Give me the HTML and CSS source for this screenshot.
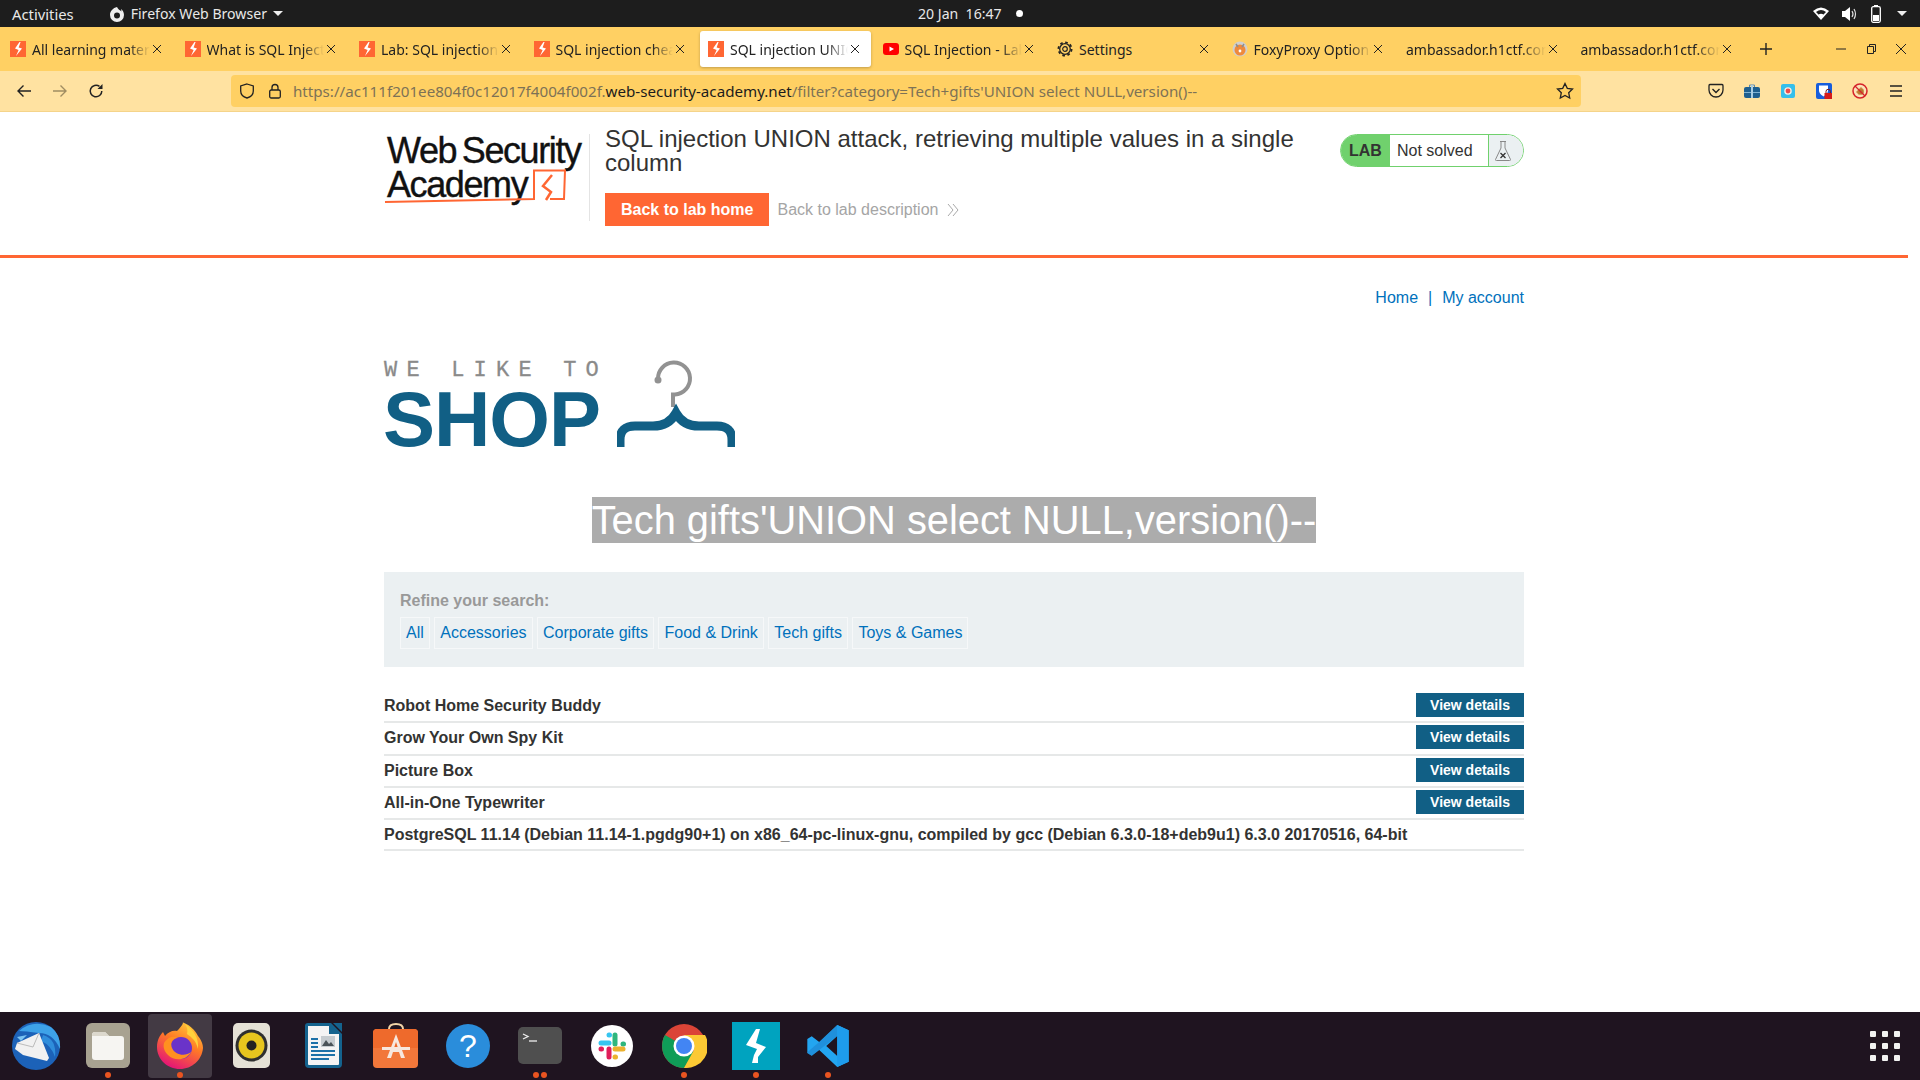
FILE: index.html
```html
<!DOCTYPE html>
<html>
  <head>
    <meta charset="utf-8">
    <title>SQL injection UNION attack</title>
    <link rel="stylesheet" href="styles.css">
  </head>
  <body>
    <svg class="defs" width="0" height="0">
      <symbol id="burp" viewBox="0 0 16 16">
        <rect width="16" height="16" fill="#ff6633"/>
        <path d="M9.500 1 5 7.600 8.600 9 6 15 12 7.600 8.600 6.600 10.600 1Z" fill="#fff"/>
      </symbol>
      <symbol id="close" viewBox="0 0 10 10">
        <path d="M1 1 9 9M9 1 1 9" stroke="#222" stroke-width="1" fill="none"/>
      </symbol>
    </svg>

    <div class="topbar">
      <div class="topbar-left">
        <span class="activities">Activities</span>
        <svg width="18" height="18" viewBox="0 0 18 18"><path fill-rule="evenodd" d="M9 2C5 3 2 6 2 10A7 7 0 0 0 16 10C16 7 14.500 5 13 4L13.500 6.500C12 5 10 4.500 9 2ZM9 7.500A3 3 0 1 1 9 13.500 3 3 0 0 1 9 7.500Z" fill="#eee"/></svg>
        <span>Firefox Web Browser</span>
        <span class="caret"></span>
      </div>
      <div class="clock"><span>20 Jan&nbsp; 16:47</span><i class="clock-dot"></i></div>
      <div class="status">
        <svg width="16" height="14" viewBox="0 0 16 14"><path d="M0 4Q8-3 16 4L8 13Z" fill="#fff"/><path d="M3 5Q8 1 13 5L8 10Z" fill="#1d1d1d"/><path d="M5.500 7.500Q8 6 10.500 7.500L8 12Z" fill="#fff"/></svg>
        <svg width="16" height="14" viewBox="0 0 16 14"><path d="M0 4H3L8 0V14L3 10H0Z" fill="#fff"/><path d="M10 4Q12 7 10 10M12 2Q15 7 12 12" stroke="#ddd" fill="none" stroke-width="1.200"/></svg>
        <svg width="10" height="18" viewBox="0 0 10 18"><rect x="3" width="4" height="2" fill="#fff"/><rect x=".7" y="1.700" width="8.600" height="15.600" rx="1.500" fill="none" stroke="#fff" stroke-width="1.300"/><rect x="2" y="10" width="6" height="6" fill="#fff"/></svg>
        <span class="caret"></span>
      </div>
    </div>

    <div class="tabbar">
      <div class="tab"><svg class="fav"><use href="#burp"/></svg><span class="tab-title fade">All learning materials</span><svg class="tab-x"><use href="#close"/></svg></div>
      <div class="tab"><svg class="fav"><use href="#burp"/></svg><span class="tab-title fade">What is SQL Injection</span><svg class="tab-x"><use href="#close"/></svg></div>
      <div class="tab"><svg class="fav"><use href="#burp"/></svg><span class="tab-title fade">Lab: SQL injection UNION</span><svg class="tab-x"><use href="#close"/></svg></div>
      <div class="tab"><svg class="fav"><use href="#burp"/></svg><span class="tab-title fade">SQL injection cheat sheet</span><svg class="tab-x"><use href="#close"/></svg></div>
      <div class="tab active"><svg class="fav"><use href="#burp"/></svg><span class="tab-title fade">SQL injection UNION attack</span><svg class="tab-x"><use href="#close"/></svg></div>
      <div class="tab">
        <svg class="fav" viewBox="0 0 16 16"><rect y="2" width="16" height="12" rx="3" fill="#f00"/><path d="M6.500 5.500 11 8 6.500 10.500Z" fill="#fff"/></svg>
        <span class="tab-title fade">SQL Injection - Lab series</span><svg class="tab-x"><use href="#close"/></svg>
      </div>
      <div class="tab">
        <svg class="fav" viewBox="0 0 16 16"><circle cx="8" cy="8" r="2.300" fill="none" stroke="#222" stroke-width="1.200"/><circle cx="8" cy="8" r="5.300" fill="none" stroke="#222" stroke-width="1.300"/><circle cx="8" cy="8" r="6.600" fill="none" stroke="#222" stroke-width="1.800" stroke-dasharray="2.600 2.580"/></svg>
        <span class="tab-title">Settings</span><svg class="tab-x"><use href="#close"/></svg>
      </div>
      <div class="tab">
        <svg class="fav" viewBox="0 0 16 16"><circle cx="8" cy="8" r="7.500" fill="#cfcfcf"/><circle cx="8" cy="9" r="5.500" fill="#ee8a3c"/><path d="M4 3 6 6M12 3 10 6" stroke="#8d8d8d" stroke-width="1.500"/><circle cx="8" cy="10" r="1.400" fill="#fff"/></svg>
        <span class="tab-title fade">FoxyProxy Options</span><svg class="tab-x"><use href="#close"/></svg>
      </div>
      <div class="tab"><span class="tab-title fade">ambassador.h1ctf.com</span><svg class="tab-x"><use href="#close"/></svg></div>
      <div class="tab"><span class="tab-title fade">ambassador.h1ctf.com</span><svg class="tab-x"><use href="#close"/></svg></div>
      <svg class="plus" width="14" height="14" viewBox="0 0 14 14"><path d="M7 1V13M1 7H13" stroke="#222" stroke-width="1.400"/></svg>
      <div class="win-controls">
        <svg width="12" height="12" viewBox="0 0 12 12"><path d="M1 6H11" stroke="#222"/></svg>
        <svg width="12" height="12" viewBox="0 0 12 12"><path d="M2.500 3.500H8.500V10.500H2.500ZM4.500 3.500V1.500H10.500V8.500H8.500" stroke="#222" fill="none"/></svg>
        <svg width="12" height="12" viewBox="0 0 12 12"><path d="M1 1 11 11M11 1 1 11" stroke="#222"/></svg>
      </div>
    </div>

    <div class="navbar">
      <div class="nav-btns">
        <svg width="16" height="16" viewBox="0 0 16 16"><path d="M15 8H2M7.500 2.500 2 8 7.500 13.500" stroke="#222" stroke-width="1.400" fill="none"/></svg>
        <svg width="16" height="16" viewBox="0 0 16 16"><path d="M1 8H14M8.500 2.500 14 8 8.500 13.500" stroke="#a08d62" stroke-width="1.400" fill="none"/></svg>
        <svg width="16" height="16" viewBox="0 0 16 16"><path d="M13.800 8A5.800 5.800 0 1 1 11.500 3.400" stroke="#222" stroke-width="1.500" fill="none"/><path d="M14.500 1V6H9.500Z" fill="#222"/></svg>
      </div>
      <div class="urlbar">
        <svg width="16" height="16" viewBox="0 0 16 16"><path d="M8 1 14.300 3V8C14.300 12 10.500 14.300 8 15 5.500 14.300 1.700 12 1.700 8V3Z" stroke="#222" stroke-width="1.300" fill="none"/></svg>
        <svg class="lock" width="14" height="16" viewBox="0 0 14 16"><rect x="1.700" y="7" width="10.600" height="8" rx="1.500" stroke="#222" stroke-width="1.300" fill="none"/><path d="M4 7V4.500A3 3 0 0 1 10 4.500V7" stroke="#222" stroke-width="1.300" fill="none"/></svg>
        <div class="url"><span class="dim">https://ac111f201ee804f0c12017f4004f002f.</span>web-security-academy.net<span class="dim">/filter?category=Tech+gifts'UNION select NULL,version()--</span></div>
        <svg width="18" height="18" viewBox="0 0 18 18"><path d="M9 1.500 11.300 6.400 16.500 7 12.700 10.700 13.700 16 9 13.400 4.300 16 5.300 10.700 1.500 7 6.700 6.400Z" stroke="#222" stroke-width="1.300" fill="none"/></svg>
      </div>
      <div class="ext-icons">
        <svg width="16" height="16" viewBox="0 0 16 16"><path d="M2 1.500H14A1.200 1.200 0 0 1 15 2.700V7A7 7 0 0 1 1 7V2.700A1.200 1.200 0 0 1 2 1.500Z" stroke="#222" stroke-width="1.300" fill="none"/><path d="M4.500 6 8 9.500 11.500 6" stroke="#222" stroke-width="1.400" fill="none"/></svg>
        <svg width="16" height="16" viewBox="0 0 16 16"><path d="M5.500 4V2H10.500V4" stroke="#5c89ad" fill="none"/><rect y="4" width="16" height="11" rx="2" fill="#1f5f8f"/><rect y="9" width="16" height="1" fill="#7fb2d4"/><rect x="7" y="2" width="2" height="13" fill="#a9cde4"/></svg>
        <svg width="16" height="16" viewBox="0 0 16 16"><rect x="1" y="1" width="14" height="14" rx="2" fill="#35bfeb"/><circle cx="8" cy="8" r="3.800" fill="#f4f0e6"/><circle cx="8" cy="8" r="2.400" fill="#ee4b4b"/></svg>
        <svg width="16" height="16" viewBox="0 0 16 16"><rect width="16" height="16" rx="2" fill="#175ddc"/><path d="M3 2.500H12V7.500C12 10.500 9 12.500 7.500 13.500 6 12.500 3 10.500 3 7.500Z" fill="#fff"/><rect x="8.500" y="10" width="7.500" height="6" fill="#d41a1a"/><path d="M10 10V8.500A2.200 2.200 0 0 1 14.400 8.500V10" stroke="#7a1515" fill="none"/></svg>
        <svg width="16" height="16" viewBox="0 0 16 16"><circle cx="8" cy="8" r="6.500" fill="#fbe3b8"/><path d="M4 9 9 4 12 7 7 12Z" fill="#c9853f"/><circle cx="9" cy="9" r="2.800" fill="#b9782f"/><circle cx="8" cy="8" r="7" stroke="#d6232a" stroke-width="1.500" fill="none"/><path d="M3 3 13 13" stroke="#d6232a" stroke-width="1.300"/></svg>
        <svg width="16" height="16" viewBox="0 0 16 16"><path d="M2 3H14M2 8H14M2 13H14" stroke="#222" stroke-width="1.500"/></svg>
      </div>
    </div>

    <div class="page">
      <header class="lab-header">
        <div class="lab-inner">
          <div class="wsa-logo">
            <div class="wsa-text">Web Security<br>Academy</div>
            <svg class="wsa-mark" width="190" height="40" viewBox="0 0 190 40">
              <path d="M1 35 150 32V3.500H181L180 32H166" stroke="#ff6633" stroke-width="2" fill="none"/>
              <path d="M168 8 159 19 167 25 162 33" stroke="#ff6633" stroke-width="2.500" fill="none"/>
            </svg>
          </div>
          <div class="lab-title">
            <h2>SQL injection UNION attack, retrieving multiple values in a single column</h2>
            <div class="lab-actions">
              <a class="btn-orange">Back to lab home</a>
              <a class="back-desc">Back to lab description</a>
              <svg width="12" height="14" viewBox="0 0 12 14"><path d="M1 1 6 7 1 13M6 1 11 7 6 13" stroke="#a9a9a9" fill="none"/></svg>
            </div>
          </div>
          <div class="lab-badge">
            <span class="badge-lab">LAB</span>
            <span class="badge-status">Not solved</span>
            <span class="badge-icon">
              <svg width="18" height="22" viewBox="0 0 18 22"><path d="M6 1.500H12M7 1.500V8L1.500 19.500Q1.200 20.500 2.500 20.500H15.500Q16.800 20.500 16.500 19.500L11 8V1.500" stroke="#888" fill="none"/><path d="M6.500 13 11.500 18M11.500 13 6.500 18" stroke="#333" stroke-width="1.300"/></svg>
            </span>
          </div>
        </div>
      </header>

      <div class="container">
        <div class="top-links"><a>Home</a><span class="sep">|</span><a>My account</a></div>

        <div class="shop-logo">
          <div class="shop-text">
            <div class="we-like">WE LIKE TO</div>
            <div class="shop">SHOP</div>
          </div>
          <svg class="hanger" width="118" height="90" viewBox="0 0 118 90">
            <path d="M41 19A16 16 0 1 1 58 34.500H56V47" stroke="#929292" stroke-width="4" fill="none"/>
            <circle cx="41" cy="20" r="3.500" fill="#929292"/>
            <path d="M3 87V80Q3 66 18 66H36Q52 66 59 53 66 66 82 66H100Q115 66 115 80V87" stroke="#115f85" stroke-width="9" fill="none"/>
          </svg>
        </div>

        <h1 class="search-title"><span class="selected">Tech gifts'UNION select NULL,version()--</span></h1>

        <section class="filter">
          <div class="filter-label">Refine your search:</div>
          <div class="filter-links">
            <a>All</a><a>Accessories</a><a>Corporate gifts</a><a>Food &amp; Drink</a><a>Tech gifts</a><a>Toys &amp; Games</a>
          </div>
        </section>

        <div class="products">
          <div class="row"><span>Robot Home Security Buddy</span><a class="btn-view">View details</a></div>
          <div class="row"><span>Grow Your Own Spy Kit</span><a class="btn-view">View details</a></div>
          <div class="row"><span>Picture Box</span><a class="btn-view">View details</a></div>
          <div class="row"><span>All-in-One Typewriter</span><a class="btn-view">View details</a></div>
          <div class="row last"><span>PostgreSQL 11.14 (Debian 11.14-1.pgdg90+1) on x86_64-pc-linux-gnu, compiled by gcc (Debian 6.3.0-18+deb9u1) 6.3.0 20170516, 64-bit</span></div>
        </div>
      </div>
    </div>

    <div class="dock">
      <div class="dock-item">
        <svg width="50" height="50" viewBox="0 0 50 50"><circle cx="25" cy="25" r="24" fill="#1c62b8"/><path d="M8 10Q22-2 40 6 50 14 49 28 42 12 28 12 14 10 8 10Z" fill="#3ea2e8"/><path d="M32 14Q46 18 44 36 40 24 30 20Z" fill="#2f8ddb"/><path d="M6 22 28 12 38 37 36 40 12 34 4 28Z" fill="#f1f1f1"/><path d="M6 22 22 26 28 12" stroke="#bbb" fill="none"/><path d="M6 16 16 14 10 20Z" fill="#7cc4f2"/></svg>
      </div>
      <div class="dock-item running">
        <svg width="44" height="46" viewBox="0 0 44 46"><rect width="44" height="45" rx="6" fill="#a8a291"/><path d="M6 12Q6 9 9 9H19L23 13H35Q38 13 38 16V34Q38 37 35 37H9Q6 37 6 34Z" fill="#f6f5f2"/><path d="M6 13Q6 9 9 9H19L23 13Z" fill="#dcd8cd"/></svg>
      </div>
      <div class="dock-item running highlighted">
        <svg width="46" height="48" viewBox="0 0 46 48">
          <defs>
            <linearGradient id="fx" x1="0.800" y1="0" x2="0.300" y2="1"><stop offset="0" stop-color="#ffd23c"/><stop offset=".45" stop-color="#ff7a26"/><stop offset="1" stop-color="#e3107a"/></linearGradient>
          </defs>
          <path d="M23 47C10 47 0 37 0 25 0 18 3 13 6 10L8 14C11 10 16 8 20 9 26 3 27 0 25 0 36 4 40 12 41 14 45 19 46 23 46 26 45 38 35 47 23 47Z" fill="url(#fx)"/>
          <circle cx="24" cy="26" r="11" fill="#6a33c9"/>
          <path d="M7 21C12 14 17 14 21 16 15 16 13 21 15 26 18 33 28 35 34 30 30 38 18 40 11 33 7 29 6 25 7 21Z" fill="#ff9020"/>
          <path d="M28 2C37 8 42 16 41 27 39 18 34 15 30 12 31 8 30 5 28 2Z" fill="#ffd23c"/>
        </svg>
      </div>
      <div class="dock-item">
        <svg width="38" height="46" viewBox="0 0 38 46"><rect width="37" height="45" rx="5" fill="#e5e1d6"/><circle cx="18.500" cy="22.500" r="16" fill="#2f2f2f"/><circle cx="18.500" cy="22.500" r="13" fill="#e7c51e"/><circle cx="18.500" cy="22.500" r="5" fill="#222"/></svg>
      </div>
      <div class="dock-item">
        <svg width="38" height="46" viewBox="0 0 38 46"><path d="M3 0H26L37 11V41Q37 45 33 45H4Q0 45 0 41V3Q0 0 3 0Z" fill="#14638e"/><path d="M3 3H24V11H34V41Q34 42 33 42H4Q3 42 3 41Z" fill="#f4f4f4"/><path d="M28 0 37 0V9Z" fill="#14638e"/><rect x="16" y="13" width="14" height="11" fill="#c6ccd0"/><path d="M17 23 21 17 24 21 26 19 29 23Z" fill="#4a5358"/><path d="M6 16H13M6 20H13M6 24H13M6 28H30M6 32H30M6 36H24" stroke="#1c71a8" stroke-width="2"/></svg>
      </div>
      <div class="dock-item">
        <svg width="46" height="46" viewBox="0 0 46 46"><path d="M16 6Q16 1 23 1 30 1 30 6" stroke="#f2d4a8" stroke-width="2" fill="none"/><rect y="6" width="45" height="39" rx="4" fill="#f2773a"/><path d="M0 10Q0 6 4 6H41Q45 6 45 10V25H0Z" fill="#ee6a2c"/><path d="M23 11 14 35H18L20 29H26L28 35H32ZM21 25 23 19 25 25Z" fill="#f7e7de"/><path d="M9 24H37V27H9Z" fill="#f7e7de"/></svg>
      </div>
      <div class="dock-item">
        <svg width="46" height="46" viewBox="0 0 46 46"><circle cx="23" cy="23" r="22" fill="#2a8ddb"/><text x="23" y="34" text-anchor="middle" class="help-q">?</text></svg>
      </div>
      <div class="dock-item running two">
        <svg width="46" height="38" viewBox="0 0 46 38"><rect x="1" width="44" height="37" rx="5" fill="#4f4f4f"/><path d="M6 7 11 9.500 6 12" stroke="#eee" fill="none" stroke-width="1.300"/><path d="M12 14H20" stroke="#eee" stroke-width="1.300"/></svg>
      </div>
      <div class="dock-item">
        <svg width="44" height="44" viewBox="0 0 44 44"><circle cx="22" cy="22" r="21" fill="#fff"/><g fill="none" stroke-width="5" stroke-linecap="round"><path d="M25 11V20" stroke="#2eb67d"/><path d="M33 20H33.500" stroke="#2eb67d"/><path d="M11 19H19" stroke="#36c5f0"/><path d="M19 11H19.500" stroke="#36c5f0"/><path d="M25 25H33" stroke="#ecb22e"/><path d="M25 33H25.500" stroke="#ecb22e"/><path d="M19 25V33" stroke="#e01e5a"/><path d="M11 25H11.500" stroke="#e01e5a"/></g></svg>
      </div>
      <div class="dock-item running">
        <svg width="46" height="46" viewBox="0 0 46 46"><circle cx="23" cy="23" r="22" fill="#db4437"/><path d="M23 23 4 12A22 22 0 0 0 23 45L33 29Z" fill="#0f9d58"/><path d="M23 12H44A22 22 0 0 1 23 45L33 27Z" fill="#fcc934"/><circle cx="23" cy="23" r="10.500" fill="#fff"/><circle cx="23" cy="23" r="8" fill="#4285f4"/></svg>
      </div>
      <div class="dock-item running">
        <svg width="48" height="48" viewBox="0 0 48 48"><rect width="48" height="48" fill="#00a3bf"/><path d="M24 7 14 23 25 27 22 33 20 41 26 41 26 35 34 25 24 21 28 7Z" fill="#fff"/></svg>
      </div>
      <div class="dock-item running">
        <svg width="44" height="44" viewBox="0 0 100 100"><path fill-rule="evenodd" d="M71 2 97 14V86L71 98 30 59 13 72 3 66V34L13 28 30 41ZM71 27 46 50 71 73Z" fill="#23a5f0"/><path d="M71 2V27L13 72 3 66V64L30 41Z" fill="#1c82cf" opacity=".6"/><path d="M71 98 97 86V14L71 2Z" fill="#1e9cec"/></svg>
      </div>
      <div class="app-grid"><i></i><i></i><i></i><i></i><i></i><i></i><i></i><i></i><i></i></div>
    </div>
  </body>
</html>
```

FILE: styles.css
```css
* {
  box-sizing: border-box;
}
html, body {
  margin: 0;
  height: 1080px;
  overflow: hidden;
}
body {
  display: flex;
  flex-direction: column;
  font-family: "Liberation Sans", Arial, sans-serif;
  font-size: 16px;
  color: #333332;
  background: #fff;
}
a {
  color: #0071bc;
  text-decoration: none;
}
.defs {
  position: absolute;
}

/* desktop top bar */
.topbar {
  height: 27px;
  flex: none;
  background: #1d1d1d;
  color: #e8e8e8;
  font-family: "Noto Sans", sans-serif;
  font-size: 14.100px;
  display: flex;
  align-items: center;
  padding: 0 13px 0 12px;
  position: relative;
}
.topbar-left {
  display: flex;
  align-items: center;
}
.activities {
  margin-right: 34px;
  font-size: 14.800px;
}
.topbar-left svg {
  margin-right: 5px;
}
.caret {
  display: inline-block;
  border-left: 5px solid transparent;
  border-right: 5px solid transparent;
  border-top: 5px solid #eee;
  margin-left: 6px;
}
.status .caret {
  margin-left: 3px;
}
.clock {
  position: absolute;
  left: 918px;
  display: flex;
  align-items: center;
}
.clock-dot {
  width: 7px;
  height: 7px;
  border-radius: 50%;
  background: #fff;
  margin-left: 14px;
}
.status {
  margin-left: auto;
  display: flex;
  align-items: center;
  gap: 13px;
}

/* browser tabs */
.tabbar {
  height: 44px;
  flex: none;
  background: #ffd063;
  display: flex;
  align-items: center;
  padding-left: 2px;
  font-family: "Noto Sans", sans-serif;
  font-size: 14px;
  color: #222;
}
.tab {
  width: 174.500px;
  height: 36px;
  flex: none;
  display: flex;
  align-items: center;
  padding: 0 15px 0 8px;
  border-radius: 3px;
}
.tab.active {
  width: 171px;
  margin-right: 3.500px;
  padding-right: 11.500px;
  background: #fff;
  box-shadow: 0 1px 3px rgba(0, 0, 0, 0.25);
}
.fav {
  width: 16px;
  height: 16px;
  flex: none;
  margin-right: 6px;
}
.tab-title {
  flex: 1;
  min-width: 0;
  overflow: hidden;
  white-space: nowrap;
}
.fade {
  -webkit-mask-image: linear-gradient(to right, #000 82%, transparent 100%);
  mask-image: linear-gradient(to right, #000 82%, transparent 100%);
}
.tab-x {
  width: 10px;
  height: 10px;
  flex: none;
  margin-left: 2px;
}
.plus {
  margin-left: 12px;
}
.win-controls {
  margin-left: auto;
  display: flex;
  align-items: center;
  gap: 18px;
  padding-right: 13px;
}

/* url row */
.navbar {
  height: 41px;
  flex: none;
  background: #ffe2a1;
  border-bottom: 1px solid #f5d48a;
  display: flex;
  align-items: center;
}
.nav-btns {
  width: 231px;
  padding-left: 16px;
  display: flex;
  gap: 20px;
}
.urlbar {
  width: 1350px;
  height: 32px;
  background: #ffd063;
  border-radius: 4px;
  display: flex;
  align-items: center;
  padding: 0 7px 0 8px;
  font-family: "Noto Sans", sans-serif;
  font-size: 15.150px;
  color: #1c1c1c;
}
.lock {
  margin-left: 13px;
}
.url {
  flex: 1;
  margin-left: 11px;
  white-space: nowrap;
}
.dim {
  color: #7d7256;
}
.ext-icons {
  margin-left: 127px;
  display: flex;
  gap: 20px;
}

/* page inside the browser */
.page {
  flex: 1;
  width: 1908px;
  min-height: 0;
}
.lab-header {
  height: 146px;
  border-bottom: 3px solid #ff6633;
}
.lab-inner {
  width: 1140px;
  margin: 0 auto;
  display: flex;
  position: relative;
}
.wsa-logo {
  width: 206px;
  height: 87px;
  margin-top: 22px;
  border-right: 1px solid #e4e4e4;
  padding: 0 0 0 3px;
  position: relative;
  flex: none;
}
.wsa-text {
  font-size: 36px;
  line-height: 34px;
  letter-spacing: -1.400px;
  word-spacing: -3px;
  color: #111;
  -webkit-text-stroke: 0.400px #111;
}
.wsa-mark {
  position: absolute;
  left: 0;
  top: 33px;
}
.lab-title {
  width: 720px;
  margin-left: 15px;
  padding-top: 15px;
}
.lab-title h2 {
  margin: 0;
  font-size: 24px;
  font-weight: 400;
  line-height: 24px;
}
.lab-actions {
  display: flex;
  align-items: center;
  margin-top: 18px;
}
.btn-orange {
  height: 33px;
  padding: 0 16px;
  background: #ff6633;
  color: #fff;
  font-weight: 700;
  line-height: 33px;
}
.back-desc {
  margin: 0 9px 0 8px;
  color: #a5a5a5;
}
.lab-badge {
  position: absolute;
  right: 0;
  top: 22px;
  width: 184px;
  height: 33px;
  display: flex;
  border: 1px solid #70d16d;
  border-radius: 17px;
  overflow: hidden;
  line-height: 31px;
}
.badge-lab {
  width: 49px;
  padding-left: 8px;
  background: #70d16d;
  font-weight: 700;
}
.badge-status {
  width: 99px;
  padding-left: 7px;
  border-right: 1px solid #70d16d;
}
.badge-icon {
  flex: 1;
  background: #ebf0f2;
  display: flex;
  align-items: center;
  justify-content: center;
  padding-right: 7px;
}

.container {
  width: 1140px;
  margin: 0 auto;
}
.top-links {
  display: flex;
  justify-content: flex-end;
  margin-top: 31px;
  line-height: 18px;
}
.sep {
  margin: 0 10px;
  color: #0071bc;
}
.shop-logo {
  display: flex;
  align-items: flex-end;
  margin-top: 51px;
  height: 92px;
}
.shop-text {
  width: 233px;
  align-self: flex-start;
}
.we-like {
  font-family: "Liberation Mono", monospace;
  font-size: 22px;
  line-height: 22px;
  letter-spacing: 9.200px;
  margin-top: 2px;
  color: #8a8a8a;
  -webkit-text-stroke: 0.300px #8a8a8a;
  white-space: nowrap;
}
.shop {
  font-size: 78px;
  font-weight: 700;
  line-height: 70px;
  letter-spacing: -1px;
  margin: 2px 0 0 -1px;
  color: #115f85;
}
.search-title {
  margin: 47px 0 0;
  font-size: 39.850px;
  font-weight: 400;
  line-height: 46px;
  text-align: center;
}
.selected {
  display: inline-block;
  background: #acacac;
  color: #fff;
}
.filter {
  height: 95px;
  margin-top: 29px;
  padding: 20px 16px 0;
  background: #ebf0f2;
}
.filter-label {
  color: #999;
  font-weight: 700;
  line-height: 18px;
}
.filter-links {
  display: flex;
  gap: 4.500px;
  margin-top: 7px;
}
.filter-links a {
  height: 32px;
  padding: 0 5px;
  border: 1px solid #f6f8f9;
  line-height: 30px;
}
.products {
  margin-top: 24px;
}
.row {
  height: 32.300px;
  display: flex;
  align-items: center;
  justify-content: space-between;
  border-bottom: 2px solid #e6e8e8;
  font-weight: 700;
  padding-bottom: 2px;
}
.row.last {
  height: 31px;
}
.row span {
  padding-top: 2px;
}
.btn-view {
  width: 108px;
  height: 24px;
  background: #115f85;
  color: #fff;
  font-size: 14px;
  line-height: 24px;
  text-align: center;
}

/* ubuntu dock */
.dock {
  height: 68px;
  flex: none;
  background: #1f1420;
  display: flex;
  align-items: center;
}
.dock-item {
  width: 72px;
  height: 64px;
  display: flex;
  align-items: center;
  justify-content: center;
  position: relative;
  border-radius: 4px;
}
.dock-item.highlighted {
  width: 64px;
  margin: 0 4px;
  background: #433a44;
}
.running::after {
  content: "";
  position: absolute;
  left: 50%;
  bottom: 0;
  width: 6px;
  height: 6px;
  margin-left: -3px;
  border-radius: 50%;
  background: #e95420;
}
.running.two::after {
  margin-left: -7px;
  box-shadow: 8px 0 0 #e95420;
}
.help-q {
  font-family: "Liberation Sans", sans-serif;
  font-size: 32px;
  fill: #fff;
}
.app-grid {
  margin-left: auto;
  margin-right: 20px;
  display: grid;
  grid-template-columns: repeat(3, 6px);
  gap: 6px;
}
.app-grid i {
  width: 6px;
  height: 6px;
  background: #f2f2f2;
  border-radius: 1px;
}
```
